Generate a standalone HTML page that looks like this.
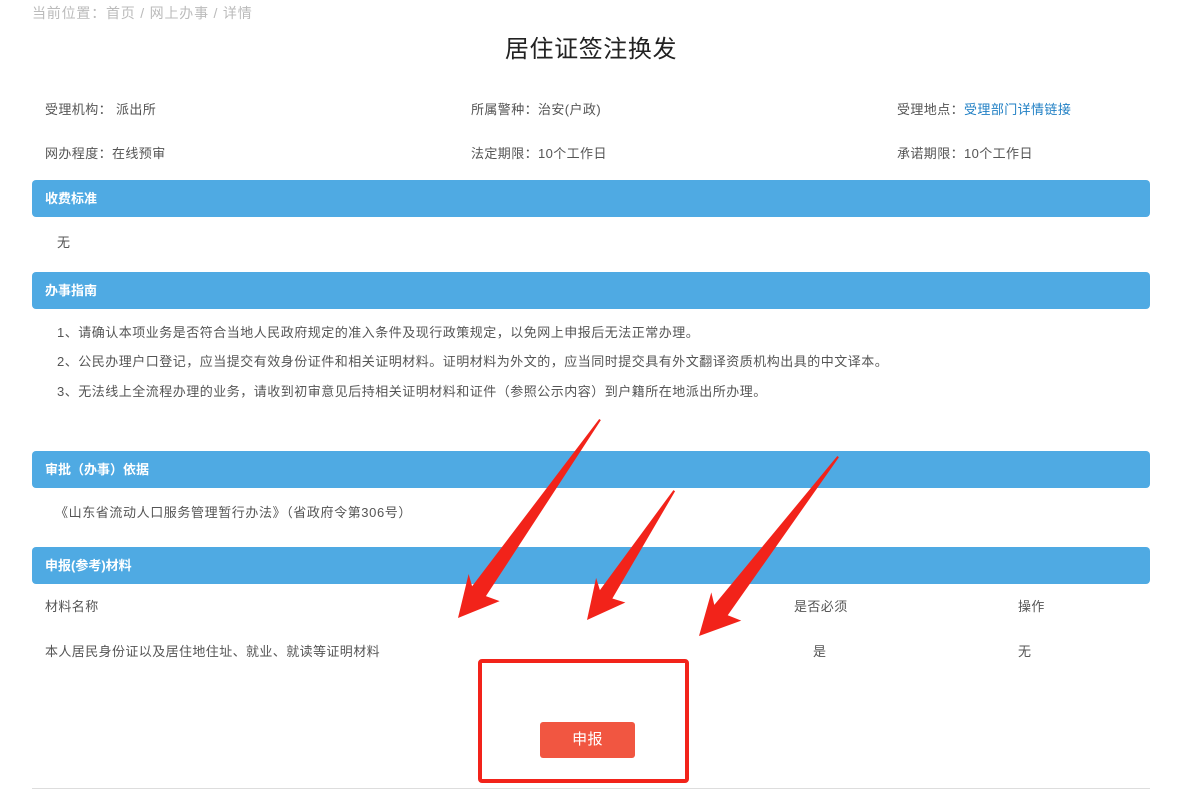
<!DOCTYPE html>
<html><head><meta charset="utf-8"><style>
*{margin:0;padding:0;box-sizing:border-box}
body{width:1200px;height:798px;background:#fff;position:relative;overflow:hidden;font-family:"Liberation Sans","Noto Sans CJK SC",sans-serif;font-size:13px;color:#555;letter-spacing:0.4px}
.a{position:absolute;white-space:nowrap;line-height:16px}
.bar{position:absolute;left:32px;width:1118px;height:37px;background:#4faae3;border-radius:4px;color:#fff;font-weight:bold;font-size:13px;line-height:37px;padding-left:13px;letter-spacing:0}
</style></head><body>
<div class="a" style="left:32px;top:5px;font-size:14px;color:#bbb;letter-spacing:0.8px">当前位置：首页 / 网上办事 / 详情</div>
<div class="a" style="left:0;width:1182px;text-align:center;top:36px;font-size:24px;line-height:28px;color:#222;letter-spacing:0.6px">居住证签注换发</div>
<div class="a" style="left:45px;top:102px">受理机构： 派出所</div>
<div class="a" style="left:471px;top:102px">所属警种：治安(户政)</div>
<div class="a" style="left:897px;top:102px">受理地点：<span style="color:#1f7fc4">受理部门详情链接</span></div>
<div class="a" style="left:45px;top:146px">网办程度：在线预审</div>
<div class="a" style="left:471px;top:146px">法定期限：10个工作日</div>
<div class="a" style="left:897px;top:146px">承诺期限：10个工作日</div>
<div class="bar" style="top:180px">收费标准</div>
<div class="a" style="left:57px;top:235px">无</div>
<div class="bar" style="top:272px">办事指南</div>
<div class="a" style="left:57px;top:325px;letter-spacing:0.5px">1、请确认本项业务是否符合当地人民政府规定的准入条件及现行政策规定，以免网上申报后无法正常办理。</div>
<div class="a" style="left:57px;top:354px;letter-spacing:0.5px">2、公民办理户口登记，应当提交有效身份证件和相关证明材料。证明材料为外文的，应当同时提交具有外文翻译资质机构出具的中文译本。</div>
<div class="a" style="left:57px;top:384px;letter-spacing:0.5px">3、无法线上全流程办理的业务，请收到初审意见后持相关证明材料和证件（参照公示内容）到户籍所在地派出所办理。</div>
<div class="bar" style="top:451px">审批（办事）依据</div>
<div class="a" style="left:55px;top:505px;letter-spacing:0.6px">《山东省流动人口服务管理暂行办法》（省政府令第306号）</div>
<div class="bar" style="top:547px">申报(参考)材料</div>
<div class="a" style="left:45px;top:599px">材料名称</div>
<div class="a" style="left:794px;top:599px">是否必须</div>
<div class="a" style="left:1018px;top:599px">操作</div>
<div class="a" style="left:45px;top:644px">本人居民身份证以及居住地住址、就业、就读等证明材料</div>
<div class="a" style="left:813px;top:644px">是</div>
<div class="a" style="left:1018px;top:644px">无</div>
<div style="position:absolute;left:478px;top:659px;width:211px;height:124px;border:4px solid #f2231a;border-radius:4px"></div>
<div style="position:absolute;left:540px;top:722px;width:95px;height:36px;background:#f15641;border-radius:3px;color:#fff;font-size:15px;line-height:36px;text-align:center">申报</div>
<div style="position:absolute;left:32px;top:788px;width:1118px;height:1px;background:#ddd"></div>
<svg width="1200" height="798" style="position:absolute;left:0;top:0">
<g fill="#f2231a">
<g transform="translate(458,618) rotate(-54.4)"><polygon points="0,0 42,-17 34,-7 244,-1 244,1 34,10 38,24"/></g>
<g transform="translate(587,620) rotate(-56)"><polygon points="0,0 40,-16 32,-6 156,-1 156,1 32,9 36,22"/></g>
<g transform="translate(699,636) rotate(-52.2)"><polygon points="0,0 42,-17 34,-7 227,-1 227,1 34,10 38,24"/></g>
</g></svg>
</body></html>
